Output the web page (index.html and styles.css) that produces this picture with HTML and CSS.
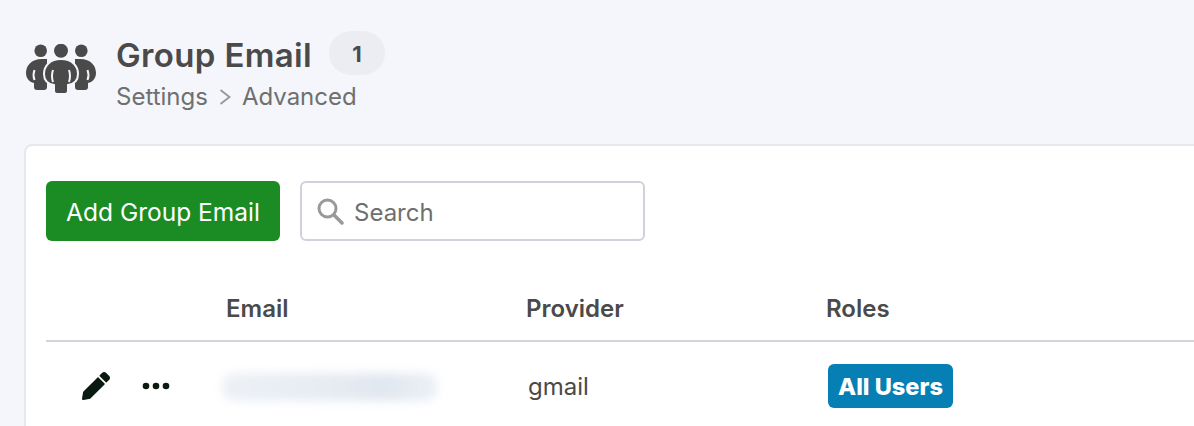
FILE: index.html
```html
<!DOCTYPE html>
<html lang="en">
<head>
  <meta charset="UTF-8" />
  <title>Group Email</title>
  <link rel="stylesheet" href="styles.css">
</head>
<body>
  <div class="page">
    <!-- Page header -->
    <header class="page-header">
      <svg class="group-icon" viewBox="0 0 70 50" width="70" height="50">
        <circle cx="14.7" cy="6.7" r="6.3" fill="#4a4a4a"/>
        <circle cx="55.3" cy="6.7" r="6.3" fill="#4a4a4a"/>
        <circle cx="35" cy="6.7" r="7" fill="#4a4a4a"/>
        <path d="M16 15C5 15 0 22 0 29c0 5 3 9 8 10v4q0 3 3 3h7q3 0 3-3V15z" fill="#4a4a4a"/>
        <path d="M54 15c11 0 16 7 16 14 0 5-3 9-8 10v4q0 3-3 3h-7q-3 0-3-3V15z" fill="#4a4a4a"/>
        <path d="M8.500 26q-2 5 0 10M61.500 26q2 5 0 10" fill="none" stroke="#f4f6fb" stroke-width="2"/>
        <path d="M35 15c-11 0-17 7-17 15 0 7 4 10 10 11v6q0 3 3 3h8q3 0 3-3v-6c6-1 10-4 10-11 0-8-6-15-17-15z" fill="#4a4a4a" stroke="#f4f6fb" stroke-width="2"/>
        <path d="M27 26q-2 6 0 12M43 26q2 6 0 12" fill="none" stroke="#f4f6fb" stroke-width="2"/>
      </svg>
      <div class="heading">
        <div class="title-row">
          <h1>Group Email</h1>
          <span class="count">1</span>
        </div>
        <div class="crumbs">
          <span>Settings</span>
          <svg class="crumb-sep" viewBox="0 0 12 16" width="12" height="16"><path d="M1.500 1 10.500 8l-9 7" fill="none" stroke="#999" stroke-width="2"/></svg>
          <span>Advanced</span>
        </div>
      </div>
    </header>

    <section class="card">
      <div class="toolbar">
        <button class="btn-add" type="button">Add Group Email</button>
        <label class="search">
          <svg viewBox="0 0 28 28" width="28" height="28"><circle cx="11.500" cy="11.500" r="8.500" fill="none" stroke="#999" stroke-width="3"/><path d="M18 18l8 8" stroke="#999" stroke-width="3.500" stroke-linecap="round"/></svg>
          <input type="text" placeholder="Search" />
        </label>
      </div>

      <div class="row row-head">
        <div></div>
        <div>Email</div>
        <div>Provider</div>
        <div>Roles</div>
      </div>
      <div class="row row-body">
        <div class="actions">
          <svg viewBox="0 0 512 512" width="28" height="28"><path fill="#0b1a10" d="M497.900 142.100l-46.100 46.100c-4.700 4.700-12.300 4.700-17 0l-111-111c-4.700-4.700-4.700-12.300 0-17l46.100-46.100c18.700-18.700 49.100-18.700 67.900 0l60.100 60.100c18.800 18.700 18.800 49.100 0 67.900zM284.200 99.800L21.600 362.400.4 483.900c-2.900 16.400 11.400 30.600 27.800 27.800l121.500-21.300 262.600-262.600c4.700-4.700 4.700-12.300 0-17l-111-111c-4.800-4.700-12.400-4.700-17.100 0z"/></svg>
          <svg viewBox="0 0 28 8" width="28" height="8"><circle cx="4" cy="4" r="3.300" fill="#0b1a10"/><circle cx="14" cy="4" r="3.300" fill="#0b1a10"/><circle cx="24" cy="4" r="3.300" fill="#0b1a10"/></svg>
        </div>
        <div><div class="blurred"></div></div>
        <div class="provider">gmail</div>
        <div><span class="role">All Users</span></div>
      </div>
    </section>
  </div>
</body>
</html>
```

FILE: styles.css
```css
* {
  box-sizing: border-box;
}

body {
  margin: 0;
  background: #f4f6fb;
  color: #4a4a4a;
  font-family: 'Inter', sans-serif;
}

.page {
  width: 1194px;
  height: 426px;
  overflow: hidden;
  padding: 31px 0 0 24px;
}

.page-header {
  display: flex;
  align-items: flex-start;
  gap: 20px;
  height: 113px;
}

.group-icon {
  margin: 13px 0 0 2px;
  flex: none;
}

.title-row {
  display: flex;
  align-items: center;
  gap: 17px;
  height: 44px;
}

h1 {
  margin: 0;
  padding-top: 4px;
  font-size: 33px;
  font-weight: 600;
  line-height: 44px;
  letter-spacing: 0.35px;
}

.count {
  width: 56px;
  height: 44px;
  border-radius: 22px;
  background: #ebedf2;
  font-size: 22px;
  font-weight: 700;
  line-height: 46px;
  text-align: center;
}

.crumbs {
  display: flex;
  align-items: center;
  gap: 11px;
  margin-top: 6px;
  font-size: 24px;
  line-height: 32px;
  color: #6f6f6f;
}

.card {
  width: 1300px;
  height: 400px;
  padding: 35px 20px;
  background: #fff;
  border: 2px solid #e6e8ee;
  border-radius: 8px;
}

.toolbar {
  display: flex;
  gap: 20px;
  height: 60px;
}

.btn-add {
  width: 234px;
  padding: 2px 0 0;
  border: none;
  border-radius: 6px;
  background: #1b8c23;
  color: #fff;
  font-family: inherit;
  font-size: 24.500px;
}

.search {
  display: flex;
  align-items: center;
  gap: 10px;
  width: 345px;
  padding: 0 14px;
  border: 2px solid #cfd2da;
  border-radius: 6px;
  background: #fff;
}

.search svg {
  flex: none;
}

.search input {
  width: 100%;
  border: none;
  outline: none;
  padding: 2px 0 0;
  font-family: inherit;
  font-size: 24px;
}

.search input::placeholder {
  color: #6f6f6f;
  opacity: 1;
}

.row {
  display: grid;
  grid-template-columns: 180px 300px 300px 1fr;
  align-items: center;
}

.row-head {
  height: 71px;
  margin-top: 30px;
  padding-top: 6px;
  border-bottom: 2px solid #d2d5dc;
  font-size: 24px;
  font-weight: 600;
}

.row-body {
  height: 88px;
  font-size: 24px;
}

.actions {
  display: flex;
  align-items: center;
  gap: 32px;
  padding-left: 36px;
}

.blurred {
  width: 216px;
  height: 28px;
  margin: 2px 0 0 -4px;
  border-radius: 12px;
  background: linear-gradient(90deg, #edf1f6, #e6ebf2 55%, #e1e7f0 75%, #edf1f6);
  filter: blur(5px);
}

.provider {
  padding-left: 2px;
}

.role {
  display: block;
  width: fit-content;
  margin-left: 2px;
  padding: 0 10px;
  border-radius: 6px;
  background: #0680b4;
  color: #fff;
  font-size: 23.600px;
  font-weight: 800;
  line-height: 46px;
  height: 44px;
}
```
